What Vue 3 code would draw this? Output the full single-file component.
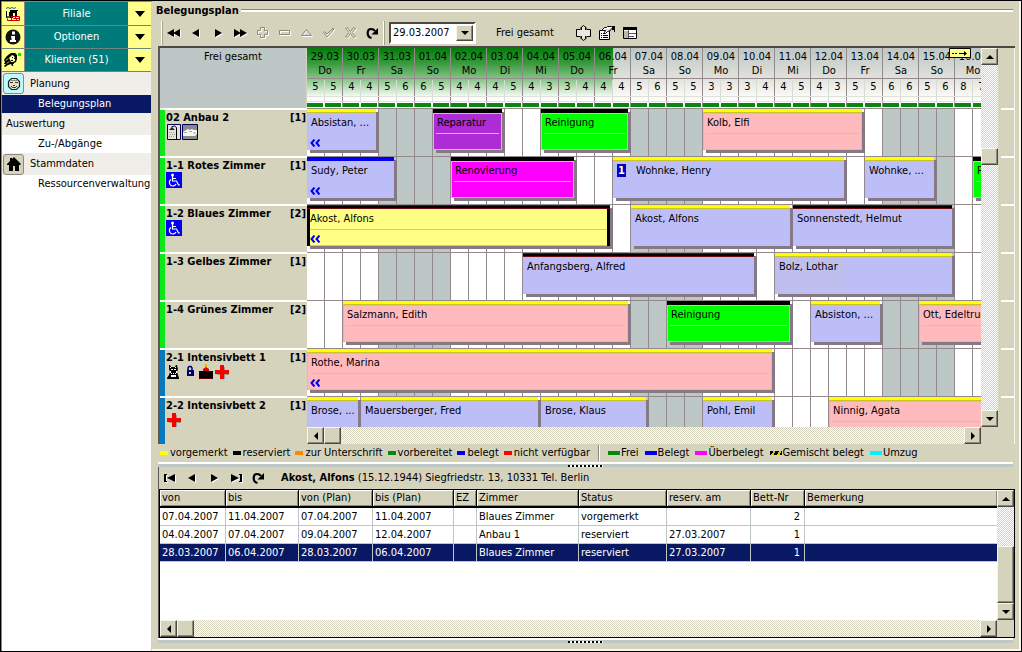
<script setup>
import { ref } from 'vue'

const days = [
  ['29.03', 'Do', 5, 5], ['30.03', 'Fr', 4, 4], ['31.03', 'Sa', 5, 6], ['01.04', 'So', 6, 5],
  ['02.04', 'Mo', 4, 4], ['03.04', 'Di', 4, 5], ['04.04', 'Mi', 4, 3], ['05.04', 'Do', 3, 4],
  ['06.04', 'Fr', 4, 4], ['07.04', 'Sa', 5, 6], ['08.04', 'So', 5, 5], ['09.04', 'Mo', 3, 3],
  ['10.04', 'Di', 3, 4], ['11.04', 'Mi', 4, 5], ['12.04', 'Do', 4, 3], ['13.04', 'Fr', 5, 5],
  ['14.04', 'Sa', 6, 6], ['15.04', 'So', 5, 6], ['16.04', 'Mo', 8, 7],
].map(([date, name, am, pm]) => ({ date, name, am, pm, weekend: name === 'Sa' || name === 'So' }))

const b = (text, from, to, fill, strip, extra = {}) => ({ text, from, to, fill, strip, ...extra })

const rooms = [
  { name: '02 Anbau 2', beds: 1, tone: 'green', icons: ['shower', 'bath'], bars: [
    b('Absistan, ...', 0, 4, 'blue', 's-yellow', { before: true }),
    b('Reparatur', 7, 11, 'purple', 's-black'),
    b('Reinigung', 13, 18, 'lime', 's-black'),
    b('Kolb, Elfi', 22, 31, 'pink', 's-yellow'),
  ] },
  { name: '1-1 Rotes Zimmer', beds: 1, tone: 'green', icons: ['wheelchair'], bars: [
    b('Sudy, Peter', 0, 5, 'blue', 's-blue', { before: true }),
    b('Renovierung', 8, 15, 'magenta', 's-black'),
    b('Wohnke, Henry', 17, 30, 'blue', 's-yellow', { badge: '1' }),
    b('Wohnke, ...', 31, 35, 'blue', 's-yellow'),
    b('Reinigung', 37, 42, 'lime', 's-black'),
  ] },
  { name: '1-2 Blaues Zimmer', beds: 2, tone: 'green', icons: ['wheelchair'], bars: [
    b('Akost, Alfons', 0, 17, 'selected', 's-reserved', { before: true }),
    b('Akost, Alfons', 18, 27, 'blue', 's-yellow'),
    b('Sonnenstedt, Helmut', 27, 36, 'blue', 's-reserved'),
  ] },
  { name: '1-3 Gelbes Zimmer', beds: 1, tone: 'green', icons: [], bars: [
    b('Anfangsberg, Alfred', 12, 25, 'blue', 's-reserved'),
    b('Bolz, Lothar', 26, 36, 'blue', 's-yellow', { option: true }),
  ] },
  { name: '1-4 Grünes Zimmer', beds: 2, tone: 'green', icons: [], bars: [
    b('Salzmann, Edith', 2, 18, 'pink', 's-yellow'),
    b('Reinigung', 20, 27, 'lime', 's-black'),
    b('Absiston, ...', 28, 32, 'blue', 's-yellow'),
    b('Ott, Edeltrud', 34, 42, 'pink', 's-yellow'),
  ] },
  { name: '2-1 Intensivbett 1', beds: 1, tone: 'steel', icons: ['cat', 'lock', 'cake', 'cross'], bars: [
    b('Rothe, Marina', 0, 26, 'pink', 's-yellow', { before: true }),
  ] },
  { name: '2-2 Intensivbett 2', beds: 1, tone: 'steel', icons: ['cross'], bars: [
    b('Brose, ...', 0, 3, 'blue', 's-yellow'),
    b('Mauersberger, Fred', 3, 13, 'blue', 's-yellow'),
    b('Brose, Klaus', 13, 19, 'blue', 's-yellow'),
    b('Pohl, Emil', 22, 26, 'blue', 's-yellow'),
    b('Ninnig, Agata', 29, 42, 'pink', 's-yellow'),
  ] },
]

const legendBookings = [
  ['vorgemerkt', 's-yellow'], ['reserviert', 's-reserved'], ['zur Unterschrift', 's-orange'],
  ['vorbereitet', 's-green'], ['belegt', 's-blue'], ['nicht verfügbar', 's-red'],
]
const legendOccupancy = [
  ['Frei', 's-green'], ['Belegt', 's-blue'], ['Überbelegt', 's-magenta'],
  ['Gemischt belegt', 's-mixed'], ['Umzug', 's-cyan'],
]

const columns = [
  ['von', 'c-von'], ['bis', 'c-bis'], ['von (Plan)', 'c-plan'], ['bis (Plan)', 'c-plan2'], ['EZ', 'c-ez'],
  ['Zimmer', 'c-room'], ['Status', 'c-status'], ['reserv. am', 'c-res'], ['Bett-Nr', 'c-bed'], ['Bemerkung', 'c-note'],
]
const bookings = [
  ['07.04.2007', '11.04.2007', '07.04.2007', '11.04.2007', '', 'Blaues Zimmer', 'vorgemerkt', '', '2', ''],
  ['04.04.2007', '07.04.2007', '09.04.2007', '12.04.2007', '', 'Anbau 1', 'reserviert', '27.03.2007', '1', ''],
  ['28.03.2007', '06.04.2007', '28.03.2007', '06.04.2007', '', 'Blaues Zimmer', 'reserviert', '27.03.2007', '1', ''],
]
const selected = ref(2)
const startDate = ref('29.03.2007')

const tools = [
  ['Woche zurück', 'first2'], ['Tag zurück', 'prev'], ['Tag vor', 'next'], ['Woche vor', 'last2'],
  ['Neu', 'plus'], ['Löschen', 'minus'], ['Bearbeiten', 'tri'], ['Speichern', 'check'],
  ['Verwerfen', 'x'], ['Aktualisieren', 'reload'],
]
const navTools = [
  ['Erster', 'first'], ['Voriger', 'prev'], ['Nächster', 'next'], ['Letzter', 'last'], ['Neu laden', 'reload'],
]
const glyphs = {
  first2: 'M7 3v8L0 7zM13 3v8L6 7z',
  last2: 'M1 3v8l7-4zM7 3v8l7-4z',
  prev: 'M10 3v8L3 7z',
  next: 'M4 3v8l7-4z',
  first: 'M1 3h3v1H3v6h1v1H1zM12 3v8L4 7z',
  last: 'M2 3v8l8-4zM10 3h3v8h-3v-1h1V4h-1z',
}
const outlines = {
  plus: 'M5.500 1.500h4v3h3v4h-3v3h-4v-3h-3v-4h3z',
  minus: 'M2.500 4.500h10v4h-10z',
  tri: 'M7.500 3.500l5 6h-10z',
  check: 'M2.500 6.500l1-1 2.500 2.500 6-6 1 1-7 8z',
  x: 'M2.500 2.500l2-1 3 4 3-4 2 1-3.500 4 3.500 4-2 1-3-4-3 4-2-1 3.500-4z',
}
</script>

<template>
  <div class="app">
    <nav class="side" aria-label="Hauptmenü">
      <div class="module lead">
        <span class="mod-icon">
          <svg viewBox="0 0 16 16" width="16" height="16">
            <path d="M1 2.500l2-1 2 1 2-1 2 1 2-1" fill="none" stroke="#1c6b6b" />
            <path d="M1 5h1v7H1zM5 4h8v1h-1v6h-2V7H8v5H2v-2h2V6h1z" fill="#000" />
            <path d="M2 10h3v2H2z" fill="#555" />
            <path d="M2.500 12.500v2h12v-4h-8v4M8.500 12.500h6M10.500 10.500v2M11.500 12.500v2" fill="none" stroke="#d00000" />
          </svg>
        </span>
        <button class="mod-name">Filiale</button>
        <button class="mod-arrow" aria-label="Filiale öffnen"></button>
      </div>
      <div class="module">
        <span class="mod-icon">
          <svg viewBox="0 0 16 16" width="16" height="16">
            <circle cx="8" cy="8" r="7.500" fill="#111" />
            <path d="M7 2.500h3v3H7zM6 7h4v4h1v2H5v-2h1.500V8.500H6z" fill="#fff" />
          </svg>
        </span>
        <button class="mod-name">Optionen</button>
        <button class="mod-arrow" aria-label="Optionen öffnen"></button>
      </div>
      <div class="module">
        <span class="mod-icon">
          <svg viewBox="0 0 18 16" width="18" height="16">
            <path d="M2 5l2-2 3-2 4 0 2 2 0 4-1 3-2 1-1 3-1 0-1-2-3 1-3 2-1-1 2-2-2 0 1-2-1-2z" fill="#000" />
            <path d="M7 4l1-1 2 1 1 2v3l-2 1-2 0-1-2-1-2z" fill="#ffff8c" />
            <path d="M8 5h1v1H8zM10 6h1v1h-1zM7 8h2v1H7z" fill="#000" />
            <path d="M2 8.500l2-2M3 11.500l2-2M9 13l1-1" stroke="#ffff8c" />
            <path d="M14 1h3v3h-3z" fill="#00e800" />
          </svg>
        </span>
        <button class="mod-name">Klienten (51)</button>
        <button class="mod-arrow" aria-label="Klienten öffnen"></button>
      </div>
      <a class="group" href="#planung">
        <span class="grp-icon cyan">
          <svg viewBox="0 0 14 14" width="14" height="14">
            <path d="M4.500 1.500h5l3 3v5l-3 3h-5l-3-3v-5z" fill="#e8e4c8" stroke="#222" stroke-width="1.200" />
            <path d="M3 5h3v1H3zM8 5h3v1H8zM6 8h2v1H6zM4 9h1v1H4zM9 9h1v1H9zM5 10h4v1H5z" fill="#333" />
            <path d="M4 3h6v1H4z" fill="#8c8a7c" />
          </svg>
        </span>Planung
      </a>
      <a class="item active" href="#belegungsplan">Belegungsplan</a>
      <a class="group bare" href="#auswertung">Auswertung</a>
      <a class="item" href="#abgaenge">Zu-/Abgänge</a>
      <a class="group short" href="#stammdaten">
        <span class="grp-icon tan">
          <svg viewBox="0 0 16 16" width="16" height="16">
            <path d="M8 1l7 7-1 1h-1v6H9v-5H7v5H3V9H1V8l3-3V2h2v1z" fill="#000" />
          </svg>
        </span>Stammdaten
      </a>
      <a class="item" href="#ressourcen">Ressourcenverwaltung</a>
    </nav>

    <main class="main">
      <h1 class="caption"><span>Belegungsplan</span></h1>

      <div class="toolbar">
        <i class="grip"></i>
        <button v-for="[label, key] in tools" :key="key" class="tool" :aria-label="label">
          <svg viewBox="0 0 15 14" width="15" height="14">
            <template v-if="glyphs[key]">
              <path :d="glyphs[key]" fill="#fff" transform="translate(1 1)" />
              <path :d="glyphs[key]" fill="#000" />
            </template>
            <template v-else-if="outlines[key]">
              <path :d="outlines[key]" fill="none" stroke="#fff" transform="translate(1 1)" />
              <path :d="outlines[key]" fill="none" stroke="#8c8a7c" />
            </template>
            <template v-else>
              <path d="M6.500 12C1 10.500 2 3 6 3c2 0 3 .5 4 2" fill="none" stroke="#000" stroke-width="2.200" />
              <path d="M13 2v6.500H6.500L9 6l2-2z" fill="#000" />
            </template>
          </svg>
        </button>
        <i class="grip"></i>
        <div class="combo">
          <input v-model="startDate" aria-label="Startdatum" />
          <button class="win up" aria-label="Kalender öffnen"><i class="tri down"></i></button>
        </div>
        <span class="view">Frei gesamt</span>
        <button class="tool wide" aria-label="Breite anpassen">
          <svg viewBox="0 0 17 16" width="17" height="16">
            <path d="M1.500 4.500h4.500V2.500h5v2h4.500v7H11v2H6v-2H1.500z" fill="#fff" opacity=".5" />
            <path d="M5.500 4.500h-4v7h4M11.500 4.500h4v7h-4M6.500 5V2.500M10.500 5V2.500M6.500 11v2.500M10.500 11v2.500M5 3.500l3.500-3 3.500 3M5 12.500l3.500 3 3.500-3" fill="none" stroke="#000" />
          </svg>
        </button>
        <button class="tool wide" aria-label="Eigenschaften">
          <svg viewBox="0 0 17 16" width="17" height="16">
            <path d="M1.500 5.500h10v9h-10z" fill="#fff" stroke="#000" />
            <path d="M3 8.500h1M5 8.500h2M3 10.500h1M5 10.500h5M3 12.500h1M5 12.500h5" stroke="#000" />
            <path d="M3.500 5.500l3-3h2l1-1h4l1 1M13.500 3.500l-1 2-3 1-2 2-1-1 1-2" fill="#fff" stroke="#000" />
            <path d="M14 1h3v6h-1V5h-2z" fill="#000" />
          </svg>
        </button>
        <button class="tool wide" aria-label="Tabelle">
          <svg viewBox="0 0 17 16" width="17" height="16">
            <path d="M2.500 2.500h13v11h-13z" fill="#fff" stroke="#000" />
            <path d="M2 2h14v3H2z" fill="#000" />
            <path d="M3 6h4v7H3z" fill="#b8b8a8" />
            <path d="M7.500 5v8M8 8.500h7M8 11.500h5" stroke="#555" />
          </svg>
        </button>
      </div>

      <section class="panel plan" aria-label="Belegung">
        <div class="labels">
          <div class="total">Frei gesamt</div>
          <div v-for="r in rooms" :key="r.name" class="room">
            <i class="tone" :class="r.tone"></i>
            <div class="room-info">
              <div class="room-head"><span>{{ r.name }}</span><span>[{{ r.beds }}]</span></div>
              <div class="room-icons">
                <svg v-for="i in r.icons" :key="i" viewBox="0 0 16 16" width="16" height="16" :class="i">
                  <template v-if="i === 'shower'">
                    <path d="M1.500 .5h13v15h-13z" fill="#e4e4dc" stroke="#00005a" />
                    <path d="M10.500 15V3.500l-2-1.500-3 1" fill="none" stroke="#000" />
                    <path d="M3 6l3-3 3 3z" fill="#222" />
                    <path d="M3 8.500h6M4 10.500h6M3 12.500h6" stroke="#999" stroke-dasharray="1 1" />
                  </template>
                  <template v-else-if="i === 'bath'">
                    <path d="M.5 .5h15v15H.5z" fill="#88888c" stroke="#00005a" />
                    <path d="M1 8l3-2 2-1 2 1 2-1 2 1 3 0v4l-2 2H3L1 12z" fill="#f4f4f0" />
                    <path d="M2 8.500h3M7 7.500h3M11 9h3" stroke="#aaa" />
                  </template>
                  <template v-else-if="i === 'wheelchair'">
                    <path d="M0 0h16v16H0z" fill="#0000f0" />
                    <circle cx="6.500" cy="3" r="1.500" fill="#fff" />
                    <path d="M6.500 4v5h4l2 4h1.500M7 6.500h3M5 7.500a3.500 3.500 0 1 0 5 4.500" fill="none" stroke="#fff" stroke-width="1.200" />
                  </template>
                  <template v-else-if="i === 'cat'">
                    <path d="M3 1h1l1 2h4l1-2h1l1 4-1 3 1 3 1 3v1H1v-1l2-3 1-3-1-3z" fill="#000" />
                    <path d="M4 3h1v1H4zM9 3h1v1H9zM5 5h2v1H5zM8 5h2v1H8zM4 7h1v2H4zM10 7h1v2h-1zM5 9h1v1H5zM7 9h1v1H7zM9 9h1v1H9zM5 11h5v2H5z" fill="#fff" />
                  </template>
                  <template v-else-if="i === 'lock'">
                    <path d="M6 6V4l1-1.500h2L10 4v2" fill="none" stroke="#000078" stroke-width="1.500" />
                    <path d="M5 6h7v6H5z" fill="#000078" />
                    <path d="M7 8h2v2H7z" fill="#c8c8d8" />
                  </template>
                  <template v-else-if="i === 'cake'">
                    <path d="M1 7h14v8H1z" fill="#000" />
                    <path d="M5 7V5l3-2 3 2v2z" fill="#e00000" />
                    <path d="M7 0h2v3H7z" fill="#f0b000" />
                    <path d="M2 14.500h12" stroke="#700000" />
                  </template>
                  <template v-else>
                    <path d="M7 3h4v4h4v4h-4v4H7v-4H3V7h4z" fill="#999" />
                    <path d="M6 1h4v5h5v4h-5v5H6v-5H1V6h5z" fill="#f80000" />
                  </template>
                </svg>
              </div>
            </div>
          </div>
        </div>

        <div class="timeline">
          <div class="view-port">
            <div class="days">
              <div v-for="d in days" :key="d.date" class="day">
                <span class="date">{{ d.date }}</span>
                <span class="dow">{{ d.name }}</span>
                <span class="half">{{ d.am }}</span>
                <span class="half">{{ d.pm }}</span>
                <i class="free"></i><i class="free"></i>
              </div>
              <span class="move-tip" aria-hidden="true">
                <svg viewBox="0 0 22 11" width="22" height="11">
                  <path d="M.5 .5h21v9H.5z" fill="#ffff8c" stroke="#000" />
                  <path d="M3 5h2v1H3zM6 5h2v1H6zM10 5h6v1h-6zM15 3l3 2.500L15 8z" fill="#000" />
                </svg>
              </span>
            </div>
            <div class="lanes">
              <div v-for="(d, i) in days" :key="d.date" class="stripe" :class="{ weekend: d.weekend }"
                :style="{ gridColumn: `${i * 2 + 1} / span 2` }"><i></i></div>
              <div v-for="(r, ri) in rooms" :key="r.name" class="lane-line" :style="{ gridRow: ri + 1 }"></div>
              <template v-for="(r, ri) in rooms" :key="r.name">
                <div v-for="bar in r.bars" :key="bar.from" class="bar" :class="bar.fill"
                  :style="{ gridRow: ri + 1, gridColumn: `${bar.from + 1} / ${Math.min(bar.to, 38) + 1}` }">
                  <i class="strip" :class="bar.strip"></i>
                  <div class="body">
                    <i v-if="bar.option" class="hatch"></i>
                    <span class="name"><b v-if="bar.badge" class="badge">{{ bar.badge }}</b>{{ bar.text }}</span>
                    <span class="more">
                      <svg v-if="bar.before" viewBox="0 0 10 8" width="10" height="8">
                        <path d="M4.500 .5L1.500 4l3 3.500M9.500 .5L6.500 4l3 3.500" fill="none" stroke="#0000f0" stroke-width="2" />
                      </svg>
                    </span>
                  </div>
                </div>
              </template>
            </div>
          </div>
          <div class="hscroll">
            <button class="win up" aria-label="Nach links"><i class="tri left"></i></button>
            <i class="win up thumb"></i>
            <span class="push"></span>
            <button class="win up" aria-label="Nach rechts"><i class="tri right"></i></button>
          </div>
        </div>

        <div class="vside">
          <div class="vscroll">
            <button class="win up" aria-label="Nach oben"><i class="tri top"></i></button>
            <span class="lead"></span>
            <i class="win up thumb"></i>
            <span class="push"></span>
            <button class="win up" aria-label="Nach unten"><i class="tri down"></i></button>
          </div>
        </div>
        <div class="rest"></div>
      </section>

      <div class="legend">
        <span v-for="[t, c] in legendBookings" :key="t" class="key"><i :class="c"></i>{{ t }}</span>
        <i class="divider"></i>
        <span v-for="[t, c] in legendOccupancy" :key="t" class="key long"><i :class="c"></i>{{ t }}</span>
      </div>
      <div class="splitter"><i></i></div>

      <section class="detail" aria-label="Buchungen">
        <div class="navrow">
          <button v-for="[label, key] in navTools" :key="key" class="tool" :aria-label="label">
            <svg viewBox="0 0 15 14" width="15" height="14">
              <template v-if="glyphs[key]">
                <path :d="glyphs[key]" fill="#fff" transform="translate(1 1)" />
                <path :d="glyphs[key]" fill="#000" />
              </template>
              <template v-else>
                <path d="M6.500 12C1 10.500 2 3 6 3c2 0 3 .5 4 2" fill="none" stroke="#000" stroke-width="2.200" />
                <path d="M13 2v6.500H6.500L9 6l2-2z" fill="#000" />
              </template>
            </svg>
          </button>
          <p class="client"><b>Akost, Alfons</b> (15.12.1944) Siegfriedstr. 13, 10331 Tel. Berlin</p>
        </div>
        <div class="grid">
          <div class="grid-main">
            <table>
              <thead>
                <tr><th v-for="[t, c] in columns" :key="t" :class="c" scope="col">{{ t }}</th></tr>
              </thead>
              <tbody>
                <tr v-for="(row, ri) in bookings" :key="ri" :class="{ sel: ri === selected }" @click="selected = ri">
                  <td v-for="(cell, ci) in row" :key="ci" :class="{ num: ci === 8 }">{{ cell }}</td>
                </tr>
              </tbody>
            </table>
            <span class="push"></span>
            <div class="hscroll">
              <button class="win up" aria-label="Tabelle nach links"><i class="tri left"></i></button>
              <i class="win up thumb"></i>
              <span class="push"></span>
              <button class="win up" aria-label="Tabelle nach rechts"><i class="tri right"></i></button>
            </div>
          </div>
          <div class="grid-side">
            <div class="vscroll">
              <button class="win up" aria-label="Tabelle nach oben"><i class="tri top"></i></button>
              <span class="push"></span>
              <i class="win up thumb tall"></i>
              <button class="win up" aria-label="Tabelle nach unten"><i class="tri down"></i></button>
            </div>
          </div>
        </div>
      </section>
      <div class="splitter last"><i></i></div>
    </main>
  </div>
</template>

<style>
body { margin: 0; background: #d6d3bd; }
</style>

<style scoped>
.app, .app * { box-sizing: border-box; }
.app {
  display: grid;
  grid-template-columns: 151px minmax(0, 1fr);
  min-height: 100vh;
  border: 1px solid #000;
  background: #d6d3bd;
  font: 11px/16px "DejaVu Sans Condensed", "DejaVu Sans", Verdana, sans-serif;
  color: #000;
}
button { font: inherit; color: inherit; padding: 0; margin: 0; border: 0; background: none; }
i { display: block; flex: none; }
svg { display: block; flex: none; }

/* side menu */
.side { background: #fff; border: solid #8c8684; border-width: 1px 0 0 1px; border-right: 1px solid #d6d3bd; display: flex; flex-direction: column; }
.module { display: grid; grid-template-columns: 23px 1fr 23px; height: 23px; border-bottom: 1px solid #6b8680; }
.module.lead { height: 24px; }
.mod-icon { display: grid; place-items: center; background: #ffff8c; border-right: 1px solid #8c8684; }
.mod-name { background: #007b7b; color: #fff; }
.mod-arrow { background: #ffff8c; display: grid; place-items: center; }
.mod-arrow::before { content: ""; border: 5px solid transparent; border-top: 6px solid #000; border-bottom: 0; }
.side a { color: #000; text-decoration: none; display: flex; align-items: center; white-space: nowrap; }
.group { background: #efeee8; height: 23px; gap: 6px; padding-left: 1px; }
.group.bare { padding-left: 4px; height: 22px; }
.group.short { height: 22px; }
.item { height: 18px; padding-left: 36px; }
.side .item.active { background: #081863; color: #fff; }
.grp-icon { width: 21px; height: 21px; border: 1px solid #8c8684; border-radius: 3px; display: grid; place-items: center; }
.cyan { background: #bdfbff; }
.tan { background: #d6d3bd; }

/* main column */
.main { display: flex; flex-direction: column; min-width: 0; padding: 0 6px 2px 6px; border: solid #f7f7ee; border-width: 0 2px 2px 0; }
.caption { display: flex; align-items: center; gap: 2px; margin: 0 0 0 -2px; height: 19px; font-size: 11px; }
.caption::after { content: ""; flex: 1; height: 2px; border-top: 1px solid #8c8684; background: #fff; }
.toolbar { display: flex; align-items: center; height: 26px; padding-left: 3px; }
.grip { width: 2px; height: 24px; background: #fff; border-right: 1px solid #a5a294; }
.tool { width: 22px; height: 20px; display: grid; place-items: center; flex: none; }
.tool.wide { width: 23px; }
.combo { display: flex; width: 87px; height: 22px; margin-left: 4px; margin-right: 20px; padding: 1px; background: #fff; border: 2px solid #8c8684; border-right-color: #fff; border-bottom-color: #fff; border-top-color: #4a4a42; border-left-color: #4a4a42; }
.combo input { flex: 1; min-width: 0; border: 0; padding: 0 0 0 1px; font: inherit; background: #fff; outline: 0; }
.combo .win { width: 17px; height: 16px; }
.view { margin-right: 18px; }

/* raised classic controls */
.win { display: grid; place-items: center; background: #d6d3bd; border: 1px solid; border-color: #f7f7ee #4a4a42 #4a4a42 #f7f7ee; box-shadow: inset -1px -1px 0 #8c8a7c; flex: none; width: 17px; height: 17px; }
.tri { width: 0; height: 0; border: 4px solid transparent; }
.tri.down { border-top-color: #000; border-bottom: 0; }
.tri.top { border-bottom-color: #000; border-top: 0; }
.tri.left { border-right-color: #000; border-left: 0; }
.tri.right { border-left-color: #000; border-right: 0; }
.hscroll, .vscroll { display: flex; background: repeating-conic-gradient(#fff 0 25%, #d6d3bd 0 50%) 0 0 / 2px 2px; flex: none; }
.hscroll { height: 17px; }
.vscroll { flex-direction: column; width: 17px; }
.push { flex: 1; }
.vscroll .lead { height: 83px; }
.vscroll .thumb.tall { height: 57px; }

/* plan */
.panel.plan { display: grid; grid-template-columns: 147px minmax(0, 1fr) 17px 17px; border-top: 2px solid #4a4a42; border-left: 2px solid #5a5a52; margin-right: -2px; }
.total { height: 60px; padding-top: 1px; margin-right: 1px; background: #bdc7c6; text-align: center; }
.room { display: flex; height: 48px; border-top: 2px solid #fff; }
.tone { width: 5px; }
.tone.green { background: #08eb18; }
.tone.steel { background: #0879bd; }
.room-info { flex: 1; padding: 0 1px; min-width: 0; }
.room-head { display: flex; justify-content: space-between; font-weight: bold; line-height: 15px; height: 14px; }
.room-icons { display: flex; }
.timeline { display: flex; flex-direction: column; min-width: 0; }
.view-port { flex: 1; overflow: hidden; background: #fff; position: relative; }
.days { display: grid; grid-template-columns: repeat(19, 36px); position: relative; height: 60px; width: 684px; background: linear-gradient(#bdc7c6 0, #dedfd8 28px, #fff 52px); }
.days::before { content: ""; position: absolute; left: 0; top: 0; width: 306px; height: 52px; background: linear-gradient(#007d08 0, #3c9c40 16px, #8cc78c 32px, #fff 50px); }
.day { position: relative; display: grid; grid-template-columns: 18px 18px; grid-template-rows: 15px 16px 15px 9px 4px; border-right: 1px solid #948a8c; text-align: center; line-height: 15px; height: 59px; }
.date, .dow { grid-column: 1 / 3; }
.date { line-height: 17px; }
.dow { border-bottom: 1px solid #948a8c; }
.half { padding-right: 1px; }
.free { grid-row: 5; background: #088610; margin-right: 2px; }
.day::after { content: ""; position: absolute; left: 17px; top: 32px; bottom: 4px; width: 1px; background: #d8dcd4; }
.days::after { content: ""; position: absolute; left: 0; right: 0; top: 48px; height: 4px; border: solid #e2e0dc; border-width: 1px 0; }
.move-tip { position: absolute; left: 642px; top: 0; }
.lanes { display: grid; grid-template-columns: repeat(38, 18px); grid-template-rows: repeat(6, 48px) 31px; width: 684px; }
.stripe { grid-row: 1 / 8; border-right: 1px solid #948a8c; }
.stripe i { width: 18px; height: 100%; border-right: 1px solid #948a8c; }
.stripe.weekend { background: #bdc7c6; }
.lane-line { grid-column: 1 / 39; border-top: 1px solid #948a8c; }
.bar { align-self: start; height: 41px; margin: 1px 3px 0 0; display: flex; flex-direction: column; min-width: 0; position: relative; }
.bar::before { content: ""; position: absolute; left: 3px; right: -3px; top: 3px; bottom: -3px; background: #847984; }
.strip { position: relative; height: 4px; }
.body { position: relative; flex: 1; border: 1px solid #c6c3bd; padding: 0 2px; display: flex; flex-direction: column; overflow: hidden; white-space: nowrap; }
.name { position: relative; height: 20px; line-height: 17px; padding-left: 1px; border-bottom: 1px solid #c6c3bd; }
.more { position: relative; padding: 5px 0 0 0; }
.blue .body { background: #bdbef7; }
.pink .body { background: #ffbabd; }
.purple .body { background: #ad2cd6; }
.lime .body { background: #00ff00; }
.magenta .body { background: #ff00ff; }
.selected .body { background: #ffff84; border: 0 solid #000; border-width: 0 3px 0 3px; padding: 1px 0 0; box-shadow: inset 0 -1px #c6c3bd; }
.selected .name { padding-left: 0; }
.badge { display: inline-block; background: #0000c6; color: #ffffc0; width: 9px; height: 13px; line-height: 13px; text-align: center; margin-right: 10px; }
.hatch { position: absolute; left: 0; top: 0; bottom: 0; width: 70px; background: repeating-conic-gradient(#c2bfe4 0 25%, #bdbef7 0 50%) 0 0 / 6px 6px; }
.s-yellow { background: #ffff00; border-bottom: 1px solid #c8c42c; }
.s-black { background: #000; }
.s-reserved { background: #000; border: 1px solid #6b1010; border-width: 1px 0; }
.s-blue { background: #0000ef; }
.s-orange { background: #ff8600; }
.s-green { background: #088610; }
.s-red { background: #ff0000; }
.s-magenta { background: #ff00ff; }
.s-cyan { background: #00f3ff; }
.s-mixed { background: repeating-linear-gradient(120deg, #000 0 3px, #d8d000 3px 5px); }
.vside { display: flex; padding-bottom: 17px; }
.rest { background: repeating-linear-gradient(#fff 0 2px, transparent 2px 48px) 3px 60px / 13px 100% no-repeat; border-right: 1px solid #f7f7ee; }

/* legend */
.legend { display: flex; align-items: center; height: 18px; padding-left: 2px; white-space: nowrap; }
.key { display: flex; align-items: center; gap: 2px; margin-right: 5px; }
.key i { width: 8px; height: 4px; border: 0; }
.key.long { gap: 1px; margin-right: 6px; }
.key.long i { width: 12px; }
.divider { width: 2px; height: 16px; background: #fff; border-left: 1px solid #8c8684; margin: 0 8px 0 3px; }
.splitter { height: 5px; display: grid; justify-items: center; align-items: end; background: linear-gradient(#fff 0 2px, #bdc7c6 2px 5px); }
.splitter i { width: 35px; height: 2px; background: repeating-linear-gradient(90deg, #000 0 2px, #fff 2px 4px); }

/* detail */
.detail { display: flex; flex-direction: column; flex: 1; margin-right: -2px; border-left: 1px solid #5a5a52; }
.navrow { display: flex; align-items: center; height: 22px; }
.client { margin: 0 0 0 12px; }
.grid { display: flex; flex: 1; background: #fff; border: 1px solid #000; }
.grid-main { flex: 1; min-width: 0; display: flex; flex-direction: column; }
.grid-side { display: flex; padding-bottom: 17px; background: #d6d3bd; }
table { width: 100%; table-layout: fixed; border-collapse: separate; border-spacing: 0; }
th, td { padding: 0 0 0 2px; text-align: left; font-weight: normal; white-space: nowrap; overflow: hidden; height: 18px; line-height: 16px; }
th { background: #d6d3bd; border-bottom: 2px solid #000; border-right: 1px solid #000; box-shadow: inset 1px 1px #fff, inset -1px -1px #8c8684; }
td { border-right: 1px solid #bdc7c6; border-bottom: 1px solid #bdc7c6; }
th:last-child, td:last-child { border-right: 0; }
td.num { text-align: right; padding-right: 4px; }
.sel td { background: #081863; color: #fff; }
.c-von { width: 66px; } .c-bis { width: 73px; } .c-plan { width: 74px; } .c-plan2 { width: 81px; } .c-ez { width: 23px; }
.c-room { width: 102px; } .c-status { width: 88px; } .c-res { width: 84px; } .c-bed { width: 54px; }
.splitter.last { margin-bottom: 4px; }
</style>
